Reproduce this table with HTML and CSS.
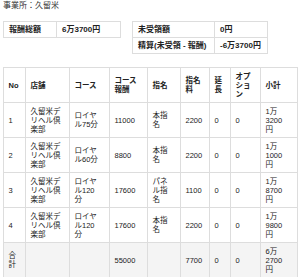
FILE: index.html
```html
<!DOCTYPE html>
<html lang="ja">
<head>
<meta charset="utf-8">
<link rel="stylesheet" href="styles.css">
</head>
<body>
<div class="office">事業所：久留米</div>
<div class="summary">
  <table class="sum sum-a">
    <colgroup><col class="c53"><col class="c64"></colgroup>
    <tr><th>報酬総額</th><td>6万3700円</td></tr>
  </table>
  <table class="sum sum-b">
    <colgroup><col class="c82"><col class="c53"></colgroup>
    <tr><th>未受領額</th><td>0円</td></tr>
    <tr><th>精算(未受領 - 報酬)</th><td>-6万3700円</td></tr>
  </table>
</div>
<table class="main">
  <colgroup>
    <col class="w-no"><col class="w-shop"><col class="w-course"><col class="w-fee">
    <col class="w-nom"><col class="w-nomfee"><col class="w-ext"><col class="w-opt"><col class="w-sub">
  </colgroup>
  <thead>
    <tr><th>No</th><th>店舗</th><th>コース</th><th>コース報酬</th><th>指名</th><th>指名料</th><th>延長</th><th>オプション</th><th>小計</th></tr>
  </thead>
  <tbody>
    <tr><td>1</td><td>久留米デリヘル倶楽部</td><td>ロイヤル75分</td><td>11000</td><td>本指名</td><td>2200</td><td>0</td><td>0</td><td>1万3200円</td></tr>
    <tr><td>2</td><td>久留米デリヘル倶楽部</td><td>ロイヤル60分</td><td>8800</td><td>本指名</td><td>2200</td><td>0</td><td>0</td><td>1万1000円</td></tr>
    <tr><td>3</td><td>久留米デリヘル倶楽部</td><td>ロイヤル120分</td><td>17600</td><td>パネル指名</td><td>1100</td><td>0</td><td>0</td><td>1万8700円</td></tr>
    <tr><td>4</td><td>久留米デリヘル倶楽部</td><td>ロイヤル120分</td><td>17600</td><td>本指名</td><td>2200</td><td>0</td><td>0</td><td>1万9800円</td></tr>
    <tr class="total"><td>合計</td><td></td><td></td><td>55000</td><td></td><td>7700</td><td>0</td><td>0</td><td>6万2700円</td></tr>
  </tbody>
</table>
</body>
</html>
```
FILE: styles.css
```css
html, body {
  margin: 0;
  padding: 0;
  background: #fff;
}
body {
  padding: 0 3px;
  font-family: "Liberation Sans", "Noto Sans CJK JP", sans-serif;
  color: #222;
}
.office {
  font-size: 8px;
  line-height: 12px;
  height: 12px;
  color: #333;
}
.summary {
  display: flex;
  align-items: flex-start;
  gap: 11px;
  margin-top: 9px;
}
table {
  border-collapse: collapse;
  table-layout: fixed;
}
.sum {
  font-size: 8px;
  font-weight: bold;
}
.sum th, .sum td {
  border: 1px solid #ddd;
  height: 15px;
  line-height: 15px;
  padding: 0 5px;
  text-align: left;
  white-space: nowrap;
}
.sum-a { width: 117px; }
.sum-b { width: 135px; }
.c53 { width: 53px; }
.c64 { width: 64px; }
.c82 { width: 82px; }

.main {
  margin-top: 13px;
  width: 294px;
  font-size: 7.5px;
  line-height: 9px;
}
.main th, .main td {
  border: 1px solid #ddd;
  height: 27px;
  padding: 3.5px 4.5px;
  text-align: left;
  vertical-align: middle;
  font-weight: normal;
  box-sizing: content-box;
}
.main th { font-weight: bold; }
.main th:nth-child(3), .main td:nth-child(3) { padding-right: 9px; }
.main th:nth-child(4), .main td:nth-child(4) { padding-right: 5px; }
.main th:nth-child(5), .main td:nth-child(5) { padding-right: 8px; }
.main th:nth-child(6), .main td:nth-child(6) { padding-right: 4px; }
.main th:nth-child(7), .main td:nth-child(7) { padding-right: 4px; }
.main th:nth-child(8), .main td:nth-child(8) { padding-right: 5px; }
.main th:nth-child(9), .main td:nth-child(9) { padding-right: 11px; }
.total td { background: #f4f4f4; }

.w-no { width: 22px; }
.w-shop { width: 44px; }
.w-course { width: 40px; }
.w-fee { width: 38px; }
.w-nom { width: 33px; }
.w-nomfee { width: 29px; }
.w-ext { width: 21px; }
.w-opt { width: 30px; }
.w-sub { width: 37px; }
```
